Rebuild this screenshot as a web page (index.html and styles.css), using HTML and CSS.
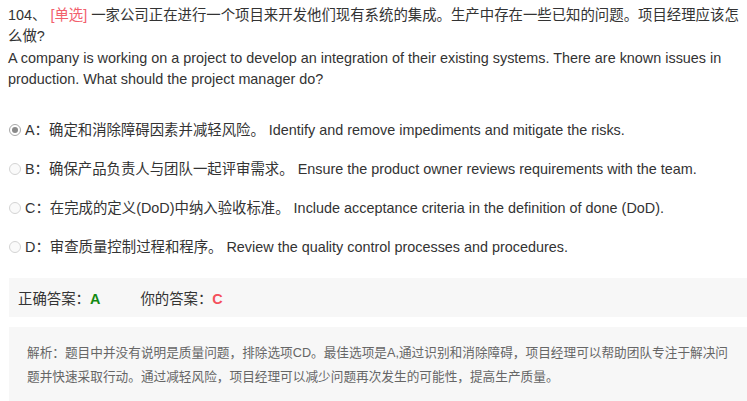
FILE: index.html
```html
<!DOCTYPE html>
<html lang="zh">
<head>
<meta charset="utf-8">
<link rel="stylesheet" href="styles.css">
</head>
<body>
<div class="question">
  <p class="q-cn">104、 <span class="tag">[单选]</span> 一家公司正在进行一个项目来开发他们现有系统的集成。生产中存在一些已知的问题。项目经理应该怎么做?</p>
  <p class="q-en">A company is working on a project to develop an integration of their existing systems. There are known issues in production. What should the project manager do?</p>
</div>
<ul class="options">
  <li class="option"><span class="radio checked"></span>A：确定和消除障碍因素并减轻风险。 Identify and remove impediments and mitigate the risks.</li>
  <li class="option"><span class="radio"></span>B：确保产品负责人与团队一起评审需求。 Ensure the product owner reviews requirements with the team.</li>
  <li class="option"><span class="radio"></span>C：在完成的定义(DoD)中纳入验收标准。 Include acceptance criteria in the definition of done (DoD).</li>
  <li class="option"><span class="radio"></span>D：审查质量控制过程和程序。 Review the quality control processes and procedures.</li>
</ul>
<div class="answer-box">
  <span class="answer-item">正确答案：<b class="correct">A</b></span>
  <span class="answer-item">你的答案：<b class="wrong">C</b></span>
</div>
<div class="analysis">解析：题目中并没有说明是质量问题，排除选项CD。最佳选项是A,通过识别和消除障碍，项目经理可以帮助团队专注于解决问题并快速采取行动。通过减轻风险，项目经理可以减少问题再次发生的可能性，提高生产质量。</div>
</body>
</html>
```
FILE: styles.css
```css
html, body {
  margin: 0;
  padding: 0;
  background: #fff;
}
body {
  padding-left: 8px;
  font-family: "Liberation Sans", Arial, "Noto Sans CJK SC", sans-serif;
  font-size: 14.4px;
  color: #333;
  overflow: hidden;
}
.question {
  padding-top: 5px;
}
.question p {
  margin: 0;
  line-height: 21.4px;
}
.tag {
  color: #f2606d;
}
.options {
  list-style: none;
  margin: 20px 0 0 0;
  padding: 0;
}
.option {
  height: 39px;
  line-height: 39px;
  display: flex;
  align-items: center;
  white-space: nowrap;
}
.radio {
  box-sizing: border-box;
  width: 12px;
  height: 12px;
  border-radius: 50%;
  border: 1px solid #d4d4d4;
  background: #fafafa;
  margin: 0 4px 0 1px;
  flex: none;
  position: relative;
}
.radio.checked {
  border-color: #a8a8a8;
  background: #fff;
}
.radio.checked::after {
  content: "";
  position: absolute;
  left: 2px;
  top: 2px;
  width: 6px;
  height: 6px;
  border-radius: 50%;
  background: #8a8a8a;
}
.answer-box {
  margin: 11px 0 0 1px;
  height: 39px;
  background: #f7f7f7;
  display: flex;
  align-items: center;
  padding-left: 9px;
}
.answer-item {
  margin-right: 40px;
}
.answer-item b {
  font-weight: bold;
}
.correct {
  color: #138a13;
}
.wrong {
  color: #f4505c;
}
.analysis {
  margin: 10px 0 0 1px;
  background: #f7f7f7;
  padding: 14px 14px 30px 18px;
  font-size: 12.66px;
  line-height: 24px;
  color: #666;
}
```
